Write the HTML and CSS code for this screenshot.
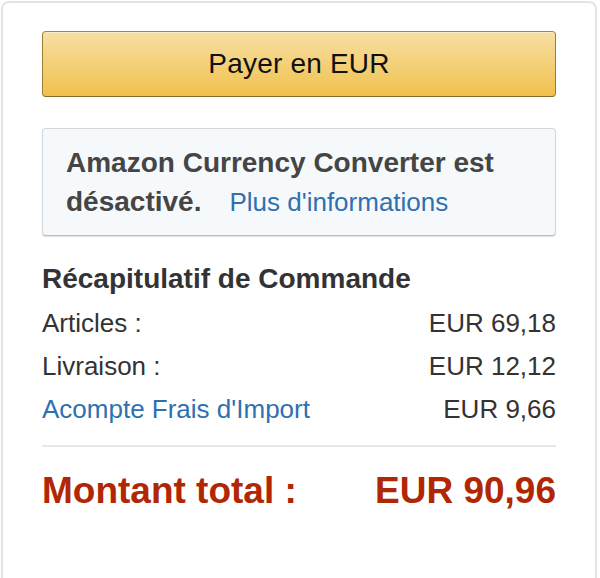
FILE: index.html
```html
<!DOCTYPE html>
<html lang="fr">
<head>
    <meta charset="UTF-8">
    <title>Récapitulatif de Commande</title>
    <link rel="stylesheet" href="styles.css">
</head>
<body>
    <div class="checkout-box">
        <button class="pay-button">Payer en EUR</button>

        <div class="converter-box">
            Amazon Currency Converter est désactivé.<a href="#" class="more-link">Plus d'informations</a>
        </div>

        <div class="summary">
            <h3 class="summary-title">Récapitulatif de Commande</h3>
            <div class="summary-row">
                <span>Articles :</span>
                <span>EUR 69,18</span>
            </div>
            <div class="summary-row">
                <span>Livraison :</span>
                <span>EUR 12,12</span>
            </div>
            <div class="summary-row">
                <a href="#" class="import-link">Acompte Frais d'Import</a>
                <span>EUR 9,66</span>
            </div>
            <hr class="divider">
            <div class="total-row">
                <span>Montant total :</span>
                <span>EUR 90,96</span>
            </div>
        </div>
    </div>
</body>
</html>
```

FILE: styles.css
```css
body { margin: 0; background-color: #ffffff; font-family: "Liberation Sans", Arial, sans-serif; color: #333; }

/* cadre principal */
.checkout-box {
    margin: 1px 3px 0 1px;
    min-height: 620px;
    padding: 28px 39px 0 39px;
    border: 2px solid #e4e4e4;
    border-bottom: none;
    border-radius: 8px 8px 0 0;
    box-sizing: border-box;
}

.pay-button {
    display: block;
    width: 100%;
    height: 66px;
    font-family: inherit;
    font-size: 28px;
    color: #111;
    letter-spacing: 0.2px;
    background: linear-gradient(to bottom, #f7dfa5, #f0c14b);
    border: 1px solid;
    border-color: #a88734 #9c7e31 #846a29;
    border-radius: 4px;
    box-shadow: inset 0 1px 0 rgba(255, 255, 255, 0.4);
    cursor: pointer;
}

.converter-box {
    margin-top: 31px;
    padding: 14px 22px 14px 23px;
    background-color: #f6f9fb;
    border: 1px solid #d3d7da;
    border-bottom-color: #b9bdc0;
    border-radius: 4px;
    box-shadow: 0 1px 1px rgba(0, 0, 0, 0.12);
    font-size: 28px;
    font-weight: bold;
    line-height: 39px;
    color: #454545;
}
.more-link { margin-left: 28px; font-size: 26px; font-weight: normal; line-height: 1; color: #2f70b0; text-decoration: none; }

.summary { margin-top: 25px; }
.summary-title { margin: 0; font-size: 28px; font-weight: bold; line-height: 36px; color: #333; }

.summary-row {
    display: flex;
    justify-content: space-between;
    font-size: 26px;
    line-height: 43px;
    color: #333;
}
.summary-title + .summary-row { margin-top: 5px; }
.import-link { color: #2f70b0; text-decoration: none; }

.divider { margin: 14px 0 0 0; border: none; height: 2px; background-color: #e7e7e7; }

.total-row {
    display: flex;
    justify-content: space-between;
    margin-top: 22px;
    font-size: 37px;
    font-weight: bold;
    line-height: 44px;
    color: #b12704;
}
```
